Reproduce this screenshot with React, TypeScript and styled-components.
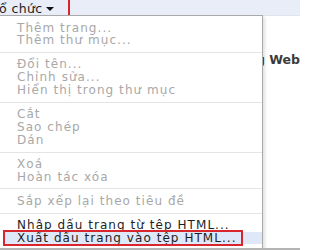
import styled, { createGlobalStyle } from "styled-components";

type MenuEntry =
  | { kind: "item"; label: string; disabled?: boolean; active?: boolean; marked?: boolean }
  | { kind: "sep" };

const entries: MenuEntry[] = [
  { kind: "item", label: "Thêm trang...", disabled: true },
  { kind: "item", label: "Thêm thư mục...", disabled: true },
  { kind: "sep" },
  { kind: "item", label: "Đổi tên...", disabled: true },
  { kind: "item", label: "Chỉnh sửa...", disabled: true },
  { kind: "item", label: "Hiển thị trong thư mục", disabled: true },
  { kind: "sep" },
  { kind: "item", label: "Cắt", disabled: true },
  { kind: "item", label: "Sao chép", disabled: true },
  { kind: "item", label: "Dán", disabled: true },
  { kind: "sep" },
  { kind: "item", label: "Xoá", disabled: true },
  { kind: "item", label: "Hoàn tác xóa", disabled: true },
  { kind: "sep" },
  { kind: "item", label: "Sắp xếp lại theo tiêu đề", disabled: true },
  { kind: "sep" },
  { kind: "item", label: "Nhập dấu trang từ tệp HTML..." },
  { kind: "item", label: "Xuất dấu trang vào tệp HTML...", active: true, marked: true },
];

const GlobalStyle = createGlobalStyle`
  html, body {
    margin: 0;
    padding: 0;
    background: #ffffff;
    overflow: hidden;
  }
`;

const Page = styled.div`
  position: relative;
  width: 300px;
  height: 250px;
  box-sizing: border-box;
  border-bottom: 2px solid #b4b4b4;
  overflow: hidden;
  font-family: "DejaVu Sans", "Liberation Sans", sans-serif;
  background: #ffffff;
`;

const TopBar = styled.div`
  height: 15px;
  background: #e8edf7;
  border-bottom: 1px solid #dfe4ec;
  display: flex;
  align-items: stretch;
`;

const OrganizeButton = styled.div`
  margin-left: -3px;
  margin-top: -2px;
  height: 16px;
  width: 69px;
  box-sizing: content-box;
  padding: 0;
  border: 2px solid #d8262c;
  display: flex;
  align-items: center;
  gap: 3px;
  font-size: 12.5px;
  letter-spacing: 0.4px;
  color: #1c1c1c;
  white-space: nowrap;
`;

const Caret = styled.span`
  width: 0;
  height: 0;
  border-left: 4.5px solid transparent;
  border-right: 4.5px solid transparent;
  border-top: 4.5px solid #111111;
  margin-top: 1px;
`;

const Content = styled.div`
  padding: 36px 0 0 247px;
  font-size: 12.5px;
  font-weight: bold;
  color: #3a3a3a;
  white-space: nowrap;
`;

const Menu = styled.div`
  position: absolute;
  left: -1px;
  top: 15px;
  bottom: 0;
  width: 264px;
  box-sizing: border-box;
  background: #ffffff;
  border: 1px solid #a9a9a9;
  border-bottom: none;
  box-shadow: 2px 2px 3px rgba(0, 0, 0, 0.12);
  padding-top: 5.6px;
  display: flex;
  flex-direction: column;
`;

const Item = styled.div<{ $disabled?: boolean; $active?: boolean }>`
  position: relative;
  height: 12.8px;
  line-height: 12.8px;
  margin-left: ${(p) => (p.$active ? "5px" : "0")};
  padding-left: ${(p) => (p.$active ? "12px" : "17px")};
  font-size: 12px;
  letter-spacing: 1.05px;
  white-space: nowrap;
  color: ${(p) => (p.$disabled ? "#a8a8a8" : "#1e1e1e")};
  background: ${(p) => (p.$active ? "#dfe8f8" : "transparent")};
`;

const Separator = styled.div`
  height: 1px;
  margin: 5px 0 5.3px;
  background: #e4e4e4;
`;

const Marker = styled.div`
  position: absolute;
  left: -2px;
  top: -2px;
  width: 240px;
  height: 16px;
  box-sizing: border-box;
  border: 2px solid #d8262c;
  pointer-events: none;
`;

export default function App() {
  return (
    <Page>
      <GlobalStyle />
      <TopBar>
        <OrganizeButton>
          ổ chức
          <Caret />
        </OrganizeButton>
      </TopBar>
      <Content>ng Web</Content>
      <Menu>
        {entries.map((e, i) =>
          e.kind === "sep" ? (
            <Separator key={i} />
          ) : (
            <Item key={i} $disabled={e.disabled} $active={e.active}>
              {e.label}
              {e.marked && <Marker />}
            </Item>
          )
        )}
      </Menu>
    </Page>
  );
}
